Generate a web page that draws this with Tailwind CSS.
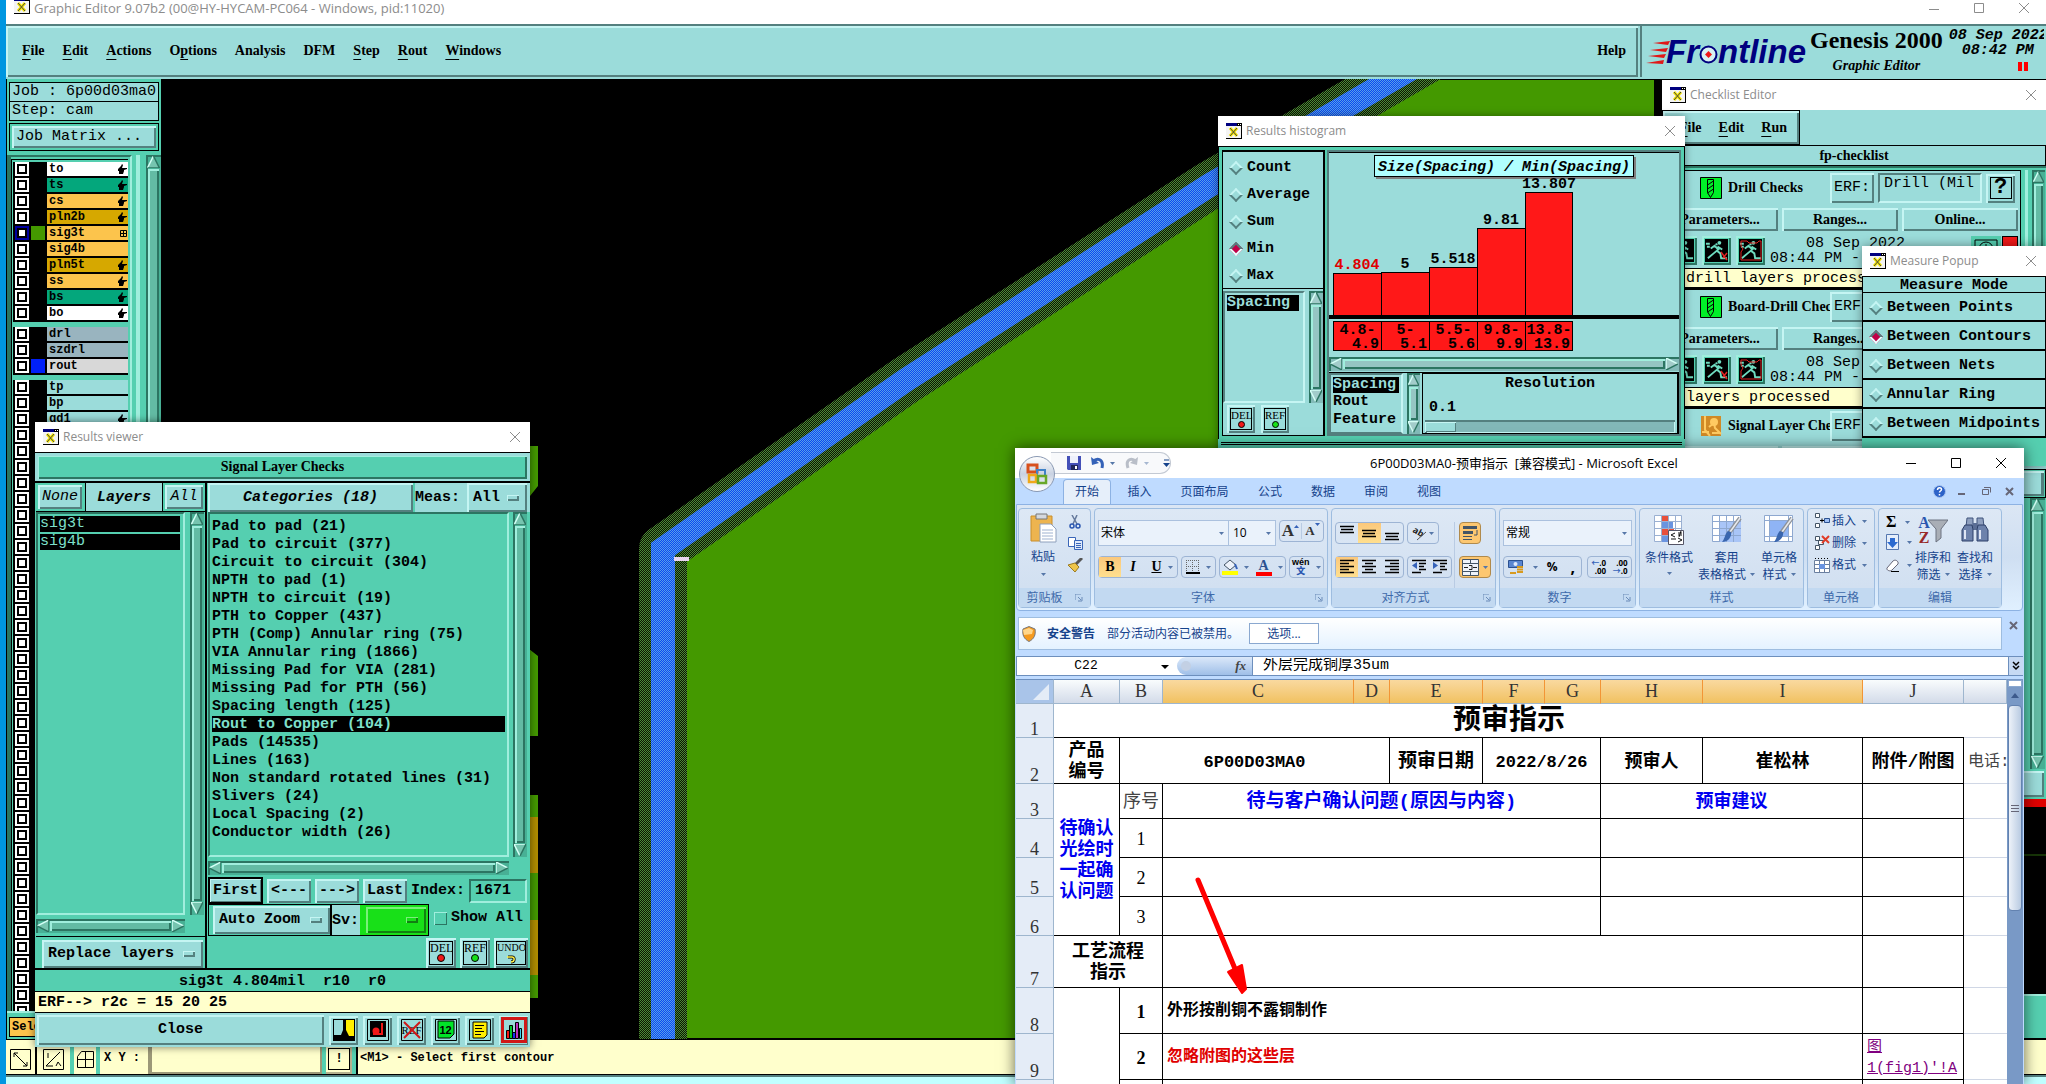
<!DOCTYPE html>
<html lang="zh-CN">

    <head>
        <meta charset="UTF-8">
        <meta name="viewport" content="width=device-width, initial-scale=1.0">
        <title>Graphic Editor 9.07b2</title>
        <script src="https://cdn.jsdelivr.net/npm/@tailwindcss/browser@4"></script>
    </head>

    <body class="relative flex h-screen overflow-hidden bg-[#0096e0] font-['Liberation_Mono','Noto_Sans_CJK_SC',monospace] text-[15px] leading-[18px] font-bold text-black">

        <!-- shared icons -->
        <svg class="hidden">
            <symbol id="x-app" viewBox="0 0 16 16">
                <path d="M0 0h16v16H0z" fill="#000"/><path d="M0 3h15v12H0z" fill="#f4f4f4"/><path d="M0 0h11v3H0z" fill="#00007f"/><path d="M12 1h1v1h-1zM14 1h1v1h-1z" fill="#fff"/>
                <path d="M4 5l7 8M11 5l-7 8" stroke="#f5e600" stroke-width="3"/><path d="M4 5l7 8M11 5l-7 8" stroke="#444" stroke-width="1"/>
            </symbol>
            <symbol id="close-x" viewBox="0 0 12 12"><path d="M1 1l10 10M11 1L1 11" stroke="currentColor" fill="none"/></symbol>
            <symbol id="tri-up" viewBox="0 0 12 12"><path d="M6 0L0 12h12z" fill="#fff" fill-opacity=".25"/><path d="M6 0L0 12" stroke="#d4fff6" stroke-width="1.5"/><path d="M6 0l6 12H0" stroke="#2c7562" fill="none" stroke-width="1.5"/></symbol>
            <symbol id="tri-down" viewBox="0 0 12 12"><path d="M6 12L0 0h12z" fill="#fff" fill-opacity=".25"/><path d="M6 12L0 0h12" stroke="#d4fff6" fill="none" stroke-width="1.5"/><path d="M12 0L6 12" stroke="#2c7562" stroke-width="1.5"/></symbol>
            <symbol id="tri-left" viewBox="0 0 12 12"><path d="M0 6L12 0v12z" fill="#fff" fill-opacity=".25"/><path d="M0 6L12 0" stroke="#d4fff6" stroke-width="1.5"/><path d="M12 0v12L0 6" stroke="#2c7562" fill="none" stroke-width="1.5"/></symbol>
            <symbol id="tri-right" viewBox="0 0 12 12"><path d="M12 6L0 0v12z" fill="#fff" fill-opacity=".25"/><path d="M12 6L0 0v12" stroke="#d4fff6" fill="none" stroke-width="1.5"/><path d="M12 6L0 12" stroke="#2c7562" stroke-width="1.5"/></symbol>
            <symbol id="hand" viewBox="0 0 10 10"><path d="M1 5l3-3 1-2 1 1-1 3h5v1L7 6v1L6 10H2V7H1z" fill="#000"/></symbol>
            <symbol id="caret" viewBox="0 0 5 3"><path d="M0 0h5L2.500 3z" fill="#5677a8"/></symbol>
            <symbol id="launcher" viewBox="0 0 8 8"><path d="M0 6V0h6" stroke="#6a8bb8" fill="none"/><path d="M3 3l3 3M7 3v4H3" stroke="#6a8bb8" fill="none"/></symbol>
            <symbol id="drill" viewBox="0 0 22 22"><path d="M.5.5h21v21H.5z" fill="#00f028" stroke="#000"/><path d="M7.500 2.500h6v13l-3 5-3-5zM7.500 8l6-4M7.500 12l6-4M7.500 16l6-4" fill="none" stroke="#000"/></symbol>
            <symbol id="signal" viewBox="0 0 22 22"><path d="M1 1h20v20H1z" fill="#d18a26"/><circle cx="14" cy="7" r="4" fill="#ffcb62"/><path d="M5 1v14l5 6M2 17h7M9 12l5-4 1 5 6 6M12 18h8" stroke="#ffcb62" stroke-width="2" fill="none"/></symbol>
            <symbol id="runner" viewBox="0 0 24 24"><path d="M0 0h24v24H0z"/><path d="M11 5l2 1M6 10l4-3 4 4-5 4-6 5M12 12l4 3 1 6M13 8l5 3M17 20h6M2 8h3M1 5h4" stroke="#6fdcc0" stroke-width="2" fill="none"/><circle cx="15" cy="4" r="2" fill="#6fdcc0"/></symbol>
            <symbol id="wbrush" viewBox="0 0 30 30"><path d="M28 3L17 18" stroke="#8d9299" stroke-width="4"/><path d="M28 3L18 17" stroke="#e8eaee" stroke-width="1.500"/><path d="M19 17c1 5-3 10-9 10 3-3 3-9 6-11z" fill="#3a66ae"/></symbol>
        </svg>

        <!-- desktop strip left of the editor -->
        <div class="w-1.5 shrink-0"></div>

        <div class="flex min-w-0 flex-1 flex-col bg-[#9bdcda]">
            <div class="flex h-6 shrink-0 items-start bg-white pl-2 text-[13px] leading-4 font-normal text-[#8c8c8c]">
                <svg class="mr-1 size-4 -mt-0.5"><use href="#x-app"/></svg>
                <h1 class="flex-1 font-['Open_Sans','Noto_Sans_CJK_SC',sans-serif]">Graphic Editor 9.07b2 (00@HY-HYCAM-PC064 - Windows, pid:11020)</h1>
                <button class="h-4 w-[45px]" aria-label="Minimize"><svg class="mx-auto h-3 w-3"><path d="M1 7.500h10" stroke="#8c8c8c"/></svg></button>
                <button class="h-4 w-[45px]" aria-label="Maximize"><svg class="mx-auto h-3 w-3"><path d="M1.500 1.500h9v9h-9z" stroke="#8c8c8c" fill="none"/></svg></button>
                <button class="h-4 w-[45px]" aria-label="Close"><svg class="mx-auto size-3"><use href="#close-x"/></svg></button>
            </div>

            <header class="flex h-[55px] shrink-0 border-t-2 border-[#54807f] pb-0.5 font-['Liberation_Serif',serif] text-[14px]">
                <nav class="flex flex-1 items-center gap-[18px] pr-3 pb-0.5 pl-4 shadow-[inset_2px_2px_#c5f5f3,inset_-2px_-2px_#54807f]">
                    <button><span class="underline underline-offset-4">F</span>ile</button>
                    <button><span class="underline underline-offset-4">E</span>dit</button>
                    <button><span class="underline underline-offset-4">A</span>ctions</button>
                    <button>O<span class="underline underline-offset-4">p</span>tions</button>
                    <button>Analysis</button>
                    <button>DFM</button>
                    <button><span class="underline underline-offset-4">S</span>tep</button>
                    <button><span class="underline underline-offset-4">R</span>out</button>
                    <button><span class="underline underline-offset-4">W</span>indows</button>
                    <button class="ml-auto">Help</button>
                </nav>
                <div class="ml-0.5 flex w-[406px] border-l-2 border-[#54807f] pl-1">
                    <div class="flex items-center text-[33px] leading-none text-[#00007f] italic font-['Liberation_Sans',sans-serif]">
                        <svg class="-mr-1 h-6 w-6" viewBox="0 0 24 24"><path d="M7 3l17-2-2 4zM4 10l18-2-2 4zM2 16l18-2-2 4zM0 23l18-3-1 4z" fill="#e01818"/></svg>
                        <span>Fr</span>
                        <svg class="mt-1.5 size-[19px]" viewBox="0 0 19 19"><circle cx="9.500" cy="9.500" r="8" fill="#d8f2f2" stroke="#00007f" stroke-width="2"/><path d="M9.500 6l3.500 3.500-3.500 3.500L6 9.500z" fill="#f01818"/></svg>
                        <span>ntline</span>
                    </div>
                    <div class="ml-1 shrink-0 text-center">
                        <div class="text-[24px] leading-7">Genesis 2000</div>
                        <div class="mt-1 leading-4 italic">Graphic Editor</div>
                    </div>
                    <div class="ml-1.5 w-[95px] shrink-0 overflow-hidden pt-0.5 text-right font-['Liberation_Mono',monospace] text-[15px] leading-[15px] italic">
                        <div class="whitespace-nowrap text-left">08 Sep 2022</div>
                        <div class="pr-2.5">08:42 PM</div>
                        <svg class="mt-1 mr-4 ml-auto h-[9px] w-2.5"><path d="M0 0h4v9H0zM6 0h4v9H6z" fill="#f00"/></svg>
                    </div>
                </div>
            </header>

            <main class="flex min-h-0 flex-1">
                <aside class="flex w-[155px] shrink-0 flex-col border-l border-black bg-[#55cfb0] pt-[3px]">
                    <div class="mx-0.5 border border-black bg-[#9bdcda] pl-0.5 font-normal">Job : 6p00d03ma0</div>
                    <div class="mx-0.5 -mt-px border border-black bg-[#9bdcda] pl-0.5 font-normal">Step: cam</div>
                    <div class="mx-0.5 mt-0.5 border border-black p-0.5"><button class="block h-[22px] w-full bg-[#9bdcda] pl-1 text-left font-normal shadow-[inset_2px_2px_#c5f5f3,inset_-2px_-2px_#54807f]">Job Matrix ...</button></div>
                    <div class="mt-1 flex min-h-0 flex-1 border-l-4 border-[#2c7562]">
                        <div class="w-[122px] overflow-hidden border-t-2 border-r-2 border-[#2c7562] border-r-[#a0eedd]">
                            <div id="layers" class="mt-0.5 mr-0.5 flex flex-col gap-[5px] border-t border-l border-black pt-0.5 pl-px text-[12px] leading-[14px]"></div>
                        </div>
                        <div class="ml-1 w-1 bg-[#a0eedd]"></div>
                        <div class="vbar ml-1.5 flex w-[15px] flex-col"></div>
                    </div>
                    <div class="h-7 border-t-2 border-[#a0eedd] pt-1 pl-0.5"><span class="block h-5 w-16 border border-black bg-[#fcc44c] pl-0.5 text-[12px]">Selected</span></div>
                </aside>

                <div class="min-w-0 flex-1 overflow-hidden bg-black">
                    <svg class="h-full w-full" viewBox="161 79 1885 960" preserveAspectRatio="xMinYMin slice">
                        <defs>
                            <pattern id="blueDots" width="2" height="2" patternUnits="userSpaceOnUse"><path d="M0 0h2v2H0z" fill="#0a48f4"/><path d="M0 0h1v1H0zM1 1h1v1H1z" fill="#58a0e8"/></pattern>
                            <pattern id="greenDots" width="2" height="2" patternUnits="userSpaceOnUse"><path d="M0 0h2v2H0z" fill="#0d1400"/><path d="M0 0h1v1H0zM1 1h1v1H1z" fill="#4a8a38"/></pattern>
                        </defs>
                        <path d="M663 1038V549L906 380 1210 185 1392 80H1654V1038z" fill="#449900"/>
                        <path d="M663 1050V549L906 380 1210 185 1450 46" fill="none" stroke="url(#greenDots)" stroke-width="48" stroke-linejoin="round"/>
                        <path d="M663 1050V549L906 380 1210 185 1450 46" fill="none" stroke="url(#blueDots)" stroke-width="24"/>
                        <path d="M674 557h15v4h-15z" fill="#e9d5f0"/>
                        <path d="M520 446h18v40l-8 10h-10zM520 642l18 14v80h-18zM520 795h18v203h-18z" fill="#449900"/>
                        <path d="M520 817h18v56h-18zM520 920h18v55h-18z" fill="#b08c00"/>
                        <path d="M2000 799h46v8h-46z" fill="#e00000"/><path d="M2000 855h46" stroke="#2f6a10"/>
                        <path d="M2000 994h46v44h-46z" fill="#55cfb0"/><path d="M2000 995h46" stroke="#a0eedd" stroke-width="2"/>
                    </svg>
                </div>
            </main>

            <footer class="shrink-0">
                <div class="flex h-9 items-stretch border-y border-black bg-[#ffffcc] pt-1 text-[12px] leading-[28px]">
                    <div class="flex w-[31px] items-center justify-center border-r-2 border-black"><svg class="size-[21px]"><path d="M.5.5h20v20H.5zM4 4l13 13M4 8V4h4M13 17h4v-4" fill="none" stroke="#000"/></svg></div>
                    <div class="flex w-[33px] items-center justify-center"><svg class="size-[21px]"><path d="M.5.5h20v20H.5zM3 17L17 3M3 17h7M5 4v5M13 17l2-4 3 4" fill="none" stroke="#000"/></svg></div>
                    <div class="flex w-[30px] items-center justify-center border-x-4 border-[#55cfb0]"><svg class="size-[17px]"><path d="M.5 5.500l4-5h12v16H.5zM8.500 0v17M0 8.500h17" fill="none" stroke="#000"/></svg></div>
                    <label for="xy" class="w-[48px] pl-1 whitespace-nowrap">X Y :</label>
                    <input id="xy" class="w-[174px] border-2 border-[#9c9878] border-l-4 px-1" type="text">
                    <div class="flex w-[34px] items-center justify-center border-x-4 border-[#55cfb0] shadow-[inset_-2px_-2px_#b5b18e]"><span class="border border-black px-1.5 leading-5">!</span></div>
                    <p class="flex-1 border-l-2 border-black pl-0.5">&lt;M1&gt; - Select first contour</p>
                </div>
                <div class="h-[9px] border-t-2 border-[#54807f] bg-[#c0ffff]"></div>
            </footer>
        </div>

        <!-- Checklist Editor -->
        <section class="absolute top-20 right-0 flex h-[719px] w-[384px] flex-col overflow-hidden bg-[#9bdcda]">
            <div class="flex h-[30px] shrink-0 items-center bg-white px-2 text-[12px] font-normal text-[#8c8c8c]">
                <svg class="mr-1 size-4"><use href="#x-app"/></svg>
                <h2 class="flex-1 font-['Open_Sans',sans-serif]">Checklist Editor</h2>
                <button aria-label="Close checklist"><svg class="mr-px size-3"><use href="#close-x"/></svg></button>
            </div>
            <nav class="flex h-[35px] w-[138px] shrink-0 items-center gap-[17px] border border-black pl-4 font-['Liberation_Serif',serif] text-[14px] shadow-[inset_2px_2px_#c5f5f3,inset_-2px_-2px_#54807f]">
                <button><span class="underline underline-offset-4">F</span>ile</button>
                <button><span class="underline underline-offset-4">E</span>dit</button>
                <button><span class="underline underline-offset-4">R</span>un</button>
            </nav>
            <h3 class="h-[21px] shrink-0 border border-black text-center font-['Liberation_Serif',serif] text-[14px] leading-5">fp-checklist</h3>
            <div class="flex h-[293px] shrink-0 border-t-2 border-[#2c7562] bg-[#55cfb0] pt-0.5">
                <div id="checks" class="w-[359px] overflow-hidden border-t border-r border-black bg-[#9bdcda]"></div>
                <div class="ml-1 w-[3px] bg-[#a0eedd]"></div>
                <div class="vbar ml-1 flex w-[13px] flex-col"></div>
            </div>
            <div class="mt-[10px] h-[29px] shrink-0 border border-black bg-[#55cfb0] p-px"><button class="h-full w-full bg-[#9bdcda] shadow-[inset_2px_2px_#c5f5f3,inset_-3px_-2px_#54807f]" aria-label="Results"></button></div>
            <div class="flex min-h-0 flex-1 justify-end border-l border-black bg-[#55cfb0] pr-px"><div class="vbar flex w-[15px] flex-col"></div></div>
            <div class="flex h-[30px] shrink-0 bg-[#55cfb0] p-0.5"><button class="flex-1 bg-[#9bdcda] shadow-[inset_2px_2px_#c5f5f3,inset_-2px_-2px_#54807f]" aria-label="Close"></button></div>
        </section>

        <!-- Results histogram -->
        <section class="absolute top-[116px] left-[1218px] flex h-[340px] w-[467px] flex-col bg-[#55cfb0] shadow-[0_0_8px_#0006]">
            <div class="flex h-[30px] shrink-0 items-center bg-white px-2 text-[12px] font-normal text-[#8c8c8c]">
                <svg class="mr-1 size-4"><use href="#x-app"/></svg>
                <h2 class="flex-1 font-['Open_Sans',sans-serif]">Results histogram</h2>
                <button aria-label="Close histogram"><svg class="mr-px size-3"><use href="#close-x"/></svg></button>
            </div>
            <div class="flex h-[293px] gap-0.5 border-x border-t border-black px-[3px] py-[3px]">
                <div class="flex w-[103px] flex-col border border-t-2 border-r-2 border-black bg-[#9bdcda]">
                    <fieldset id="stats" class="h-[136px] pt-0.5"></fieldset>
                    <div class="flex h-[116px] border-t border-black pt-0.5">
                        <div class="w-[82px] border-2 border-[#54807f] border-r-[#c5f5f3] border-b-[#c5f5f3] p-0.5"><p class="h-4 w-[72px] bg-black leading-4 text-[#9bdcda]">Spacing</p></div>
                        <div class="vbar ml-1 flex w-[14px] flex-col"></div>
                    </div>
                    <div class="flex gap-1.5 p-0.5 pl-1 font-['Liberation_Serif',serif] text-[11px] leading-3 font-normal">
                        <button class="size-7 p-[3px] shadow-[inset_2px_2px_#c5f5f3,inset_-2px_-2px_#54807f]"><span class="block h-[22px] border border-black">DEL<i class="mx-auto block size-[7px] rounded-full border border-black bg-[#f01818]"></i></span></button>
                        <button class="size-7 p-[3px] shadow-[inset_2px_2px_#c5f5f3,inset_-2px_-2px_#54807f]"><span class="block h-[22px] border border-black">REF<i class="mx-auto block size-[7px] rounded-full border border-black bg-[#18e018]"></i></span></button>
                    </div>
                </div>
                <div class="flex flex-1 flex-col border-2 border-[#54807f] bg-[#9bdcda]">
                    <div class="relative h-[168px] border-t border-black border-b-4">
                        <h3 class="mx-auto mt-0.5 h-[22px] w-[260px] border border-black bg-[#b0ffff] text-center leading-6 italic whitespace-nowrap shadow-[2px_2px_#808080]">Size(Spacing) / Min(Spacing)</h3>
                        <div id="bars" class="absolute bottom-0 left-1 flex items-end"></div>
                    </div>
                    <div id="ranges" class="mt-0.5 ml-1 flex h-[30px]"></div>
                    <div class="hbar mt-1.5 flex h-[14px]"></div>
                    <div class="mt-px flex flex-1 border-t border-black">
                        <div class="w-[74px] border-2 border-[#54807f] border-r-[#c5f5f3] pt-0.5 pl-0.5">
                            <p class="h-4 w-[66px] bg-black leading-4 text-[#9bdcda]">Spacing</p><p>Rout</p><p>Feature</p>
                        </div>
                        <div class="vbar ml-1 flex w-[13px] flex-col"></div>
                        <div class="ml-0.5 flex-1 border border-black border-r-2 px-0.5">
                            <label for="res" class="block pl-0 text-center leading-5">Resolution</label>
                            <output class="block pt-0.5 pl-1 leading-6 font-bold">0.1</output>
                            <input id="res" type="range" value="0" class="block h-[13px] w-full appearance-none bg-[#82b8b8] shadow-[inset_2px_2px_#54807f,inset_-1px_-1px_#c5f5f3] [&::-webkit-slider-thumb]:h-[10px] [&::-webkit-slider-thumb]:w-[31px] [&::-webkit-slider-thumb]:appearance-none [&::-webkit-slider-thumb]:bg-[#9bdcda] [&::-webkit-slider-thumb]:shadow-[inset_1px_1px_#c5f5f3,inset_-1px_-1px_#54807f]">
                        </div>
                    </div>
                </div>
            </div>
            <div class="mx-[3px] mt-[3px] h-[3px] border-y border-black"></div>
        </section>

        <!-- Measure Popup -->
        <section class="absolute top-[246px] right-0 h-[220px] w-[184px] bg-[#55cfb0] shadow-[0_0_10px_#0006]">
            <div class="flex h-[30px] items-center bg-white px-2 text-[12px] font-normal text-[#8c8c8c]">
                <svg class="mr-1 size-4"><use href="#x-app"/></svg>
                <h2 class="flex-1 font-['Open_Sans',sans-serif]">Measure Popup</h2>
                <button aria-label="Close popup"><svg class="mr-px size-3"><use href="#close-x"/></svg></button>
            </div>
            <h3 class="h-[17px] border border-black bg-[#9bdcda] text-center leading-[17px]">Measure Mode</h3>
            <fieldset id="modes" class="border-x border-black bg-[#9bdcda]"></fieldset>
        </section>

        <!-- Results viewer -->
        <section class="absolute top-[422px] left-[35px] flex h-[625px] w-[495px] flex-col bg-[#9bdcda] shadow-[0_0_8px_#0008]">
            <div class="flex h-[30px] shrink-0 items-center bg-white px-2 text-[12px] font-normal text-[#8c8c8c]">
                <svg class="mr-1 size-4"><use href="#x-app"/></svg>
                <h2 class="flex-1 font-['Open_Sans',sans-serif]">Results viewer</h2>
                <button aria-label="Close viewer"><svg class="mr-px size-3"><use href="#close-x"/></svg></button>
            </div>
            <div class="h-[29px] shrink-0 border-t border-black p-[3px]"><h3 class="h-[23px] bg-[#55cfb0] text-center font-['Liberation_Serif',serif] text-[14px] leading-[22px] shadow-[inset_1px_1px_#a0eedd,inset_-2px_-2px_#2c7562]">Signal Layer Checks</h3></div>
            <div class="flex h-[489px] shrink-0 border-y-2 border-black bg-[#55cfb0]">
                <div class="flex w-[172px] flex-col border-r-2 border-black pl-px">
                    <div class="flex h-[29px] items-stretch border-b border-black font-normal italic">
                        <button class="m-0.5 w-[44px] bg-[#9bdcda] shadow-[inset_2px_2px_#c5f5f3,inset_-2px_-2px_#54807f]">None</button>
                        <p class="ml-px w-[78px] border-x border-black bg-[#9bdcda] text-center leading-[29px] font-bold">Layers</p>
                        <button class="m-0.5 w-[38px] bg-[#9bdcda] shadow-[inset_2px_2px_#c5f5f3,inset_-2px_-2px_#54807f]">All</button>
                    </div>
                    <div class="flex h-[406px] font-normal text-[#7fe0cc]">
                        <ul class="w-[149px] border-2 border-[#2c7562] border-r-[#a0eedd] border-b-[#a0eedd] p-0.5">
                            <li class="mb-0.5 h-4 w-[140px] bg-black leading-4">sig3t</li>
                            <li class="h-4 w-[140px] bg-black leading-4">sig4b</li>
                        </ul>
                        <div class="vbar ml-[5px] flex w-[14px] flex-col"></div>
                    </div>
                    <div class="hbar mt-1 flex h-[14px] w-[149px]"></div>
                    <div class="mt-[3px] flex-1 border-t border-black pt-[3px] pr-0.5 pl-1.5">
                        <div class="flex h-7 items-center bg-[#9bdcda] pr-2 pl-1.5 shadow-[inset_2px_2px_#c5f5f3,inset_-2px_-2px_#54807f]">
                            <select aria-label="Layer mode" class="flex-1 appearance-none"><option>Replace layers</option></select>
                            <i class="h-[6px] w-3 shadow-[inset_1px_1px_#c5f5f3,inset_-2px_-2px_#54807f]"></i>
                        </div>
                    </div>
                </div>
                <div class="flex flex-1 flex-col pl-px">
                    <div class="flex h-[29px] bg-[#9bdcda]">
                        <button class="w-[205px] italic shadow-[inset_2px_2px_#c5f5f3,inset_-2px_-2px_#54807f]">Categories (18)</button>
                        <label for="meas" class="w-[54px] border-l-2 border-[#55cfb0] leading-[30px]">Meas:</label>
                        <div class="flex w-[60px] items-center pr-2 pl-1.5 shadow-[inset_2px_2px_#c5f5f3,inset_-2px_-2px_#54807f]">
                            <select id="meas" class="flex-1 appearance-none"><option>All</option></select>
                            <i class="h-[6px] w-3 shadow-[inset_1px_1px_#c5f5f3,inset_-2px_-2px_#54807f]"></i>
                        </div>
                    </div>
                    <div class="flex h-[345px]">
                        <ul id="cats" class="w-[301px] border-2 border-[#2c7562] border-r-[#a0eedd] border-b-[#a0eedd] pt-1 pl-0.5 font-bold"></ul>
                        <div class="vbar ml-1 flex w-[14px] flex-col"></div>
                    </div>
                    <div class="hbar mt-1 flex h-[14px] w-[301px]"></div>
                    <div class="mt-0.5 flex h-[27px] items-center gap-1">
                        <button class="h-[27px] w-[55px] border-2 border-black bg-[#9bdcda] shadow-[inset_1px_1px_#c5f5f3,inset_-1px_-1px_#54807f]">First</button>
                        <button class="h-6 w-[44px] bg-[#9bdcda] shadow-[inset_2px_2px_#c5f5f3,inset_-2px_-2px_#54807f]">&lt;---</button>
                        <button class="h-6 w-[44px] bg-[#9bdcda] shadow-[inset_2px_2px_#c5f5f3,inset_-2px_-2px_#54807f]">---&gt;</button>
                        <button class="h-6 w-[44px] bg-[#9bdcda] shadow-[inset_2px_2px_#c5f5f3,inset_-2px_-2px_#54807f]">Last</button>
                        <label for="idx">Index:</label>
                        <input id="idx" type="text" value="1671" class="h-6 w-[58px] border-2 border-[#2c7562] border-r-[#a0eedd] border-b-[#a0eedd] pl-1">
                    </div>
                    <div class="flex h-8">
                        <div class="flex border border-black">
                            <div class="my-px ml-1 flex w-[117px] items-center bg-[#9bdcda] pr-2 pl-1.5 shadow-[inset_2px_2px_#c5f5f3,inset_-2px_-2px_#54807f]">
                                <select aria-label="Zoom" class="flex-1 appearance-none"><option>Auto Zoom</option></select>
                                <i class="h-[6px] w-3 shadow-[inset_1px_1px_#c5f5f3,inset_-2px_-2px_#54807f]"></i>
                            </div>
                            <label for="sv" class="w-[30px] border-l-2 border-black bg-[#9bdcda] leading-8">Sv:</label>
                            <div class="flex w-[68px] items-center bg-[#18e018] py-0.5 pr-0.5 pl-1.5">
                                <div class="flex h-full flex-1 items-center pr-2 shadow-[inset_2px_2px_#7af07a,inset_-2px_-2px_#128012]">
                                    <select id="sv" class="w-8 appearance-none"><option></option></select>
                                    <i class="ml-auto h-[6px] w-3 shadow-[inset_1px_1px_#7af07a,inset_-2px_-2px_#128012]"></i>
                                </div>
                            </div>
                        </div>
                        <label class="flex h-7 items-center gap-1 pl-[5px]"><input type="checkbox" class="size-[13px] appearance-none shadow-[inset_1px_1px_#a0eedd,inset_-1px_-1px_#2c7562]">Show All</label>
                    </div>
                    <div class="mt-0.5 mr-0.5 flex justify-end gap-1 font-['Liberation_Serif',serif] text-[12px] leading-3 font-normal">
                        <button class="h-[30px] w-[30px] bg-[#9bdcda] p-[3px] shadow-[inset_2px_2px_#c5f5f3,inset_-2px_-2px_#54807f]"><span class="block h-6 border border-black">DEL<i class="mx-auto block size-2 rounded-full border border-black bg-[#f01818]"></i></span></button>
                        <button class="h-[30px] w-[30px] bg-[#9bdcda] p-[3px] shadow-[inset_2px_2px_#c5f5f3,inset_-2px_-2px_#54807f]"><span class="block h-6 border border-black">REF<i class="mx-auto block size-2 rounded-full border border-black bg-[#18e018]"></i></span></button>
                        <button class="h-[30px] w-[34px] bg-[#9bdcda] p-px shadow-[inset_2px_2px_#c5f5f3,inset_-2px_-2px_#54807f]"><span class="mx-px block h-6 border border-black text-[10px]">UNDO<svg class="mx-auto h-[10px] w-2.5"><path d="M2 3h4c3 0 3 5-1 5" fill="none" stroke="#000" stroke-width="3"/><path d="M1 3h5c3 0 3 5-1 5" fill="none" stroke="#fff04a" stroke-width="1.500"/></svg></span></button>
                    </div>
                </div>
            </div>
            <p class="h-[21px] shrink-0 bg-[#55cfb0] text-center leading-6 whitespace-pre">sig3t 4.804mil  r10  r0</p>
            <p class="h-[22px] shrink-0 border-y border-black bg-[#ffffcc] pl-[3px] leading-[22px]">ERF--&gt; r2c = 15 20 25</p>
            <div class="flex flex-1 items-center gap-[5px] px-0.5">
                <button class="h-[30px] w-[287px] shadow-[inset_2px_2px_#c5f5f3,inset_-2px_-2px_#54807f]">Close</button>
                <button aria-label="Histogram light" class="flex size-[29px] items-center justify-center shadow-[inset_2px_2px_#c5f5f3,inset_-2px_-2px_#54807f]"><svg class="size-[22px]"><path d="M0 0h22v22H0z"/><path d="M1 1h9v10l-2 5H1z" fill="#9bdcda"/><path d="M13 1h8v16h-5l-3-6z" fill="#ffee00"/></svg></button>
                <button aria-label="Note" class="flex size-[29px] items-center justify-center shadow-[inset_2px_2px_#c5f5f3,inset_-2px_-2px_#54807f]"><svg class="size-[22px]"><path d="M.5.5h21v21H.5z" fill="#9bdcda" stroke="#000"/><path d="M3 2h16v16H3z"/><circle cx="9" cy="12" r="3.500" fill="#f01818"/><path d="M15 4v11M6 15h10" stroke="#f01818" stroke-width="2"/></svg></button>
                <button aria-label="No reference" class="relative flex size-[29px] items-center justify-center font-['Liberation_Serif',serif] text-[11px] font-normal shadow-[inset_2px_2px_#c5f5f3,inset_-2px_-2px_#54807f]">REF<svg class="absolute size-[22px]"><path d="M.5.5h21v21H.5z" fill="none" stroke="#000"/><path d="M3 3l16 16M19 3L3 19" stroke="#d01818" stroke-width="2"/></svg></button>
                <button aria-label="Page" class="relative flex size-[29px] items-center justify-center text-[11px] shadow-[inset_2px_2px_#c5f5f3,inset_-2px_-2px_#54807f]"><svg class="absolute size-[22px]"><path d="M.5.5h21v21H.5z" fill="#9bdcda" stroke="#000"/><path d="M3 2h16v13l-4 4H3z" fill="#00e428" stroke="#000"/></svg><span class="relative font-['Liberation_Sans',sans-serif]">12</span></button>
                <button aria-label="Report" class="flex size-[29px] items-center justify-center shadow-[inset_2px_2px_#c5f5f3,inset_-2px_-2px_#54807f]"><svg class="size-[22px]"><path d="M.5.5h21v21H.5z" fill="#9bdcda" stroke="#000"/><path d="M4 3h14v13l-3 3H4z" fill="#ffee00" stroke="#000"/><path d="M6 6.500h9M6 9.500h7M6 12.500h9M6 15.500h6" stroke="#000"/></svg></button>
                <button aria-label="Histogram" class="flex size-[29px] items-center justify-center shadow-[inset_1px_1px_#c5f5f3,inset_-1px_-1px_#54807f]"><svg class="size-[26px]" viewBox="0 0 26 26"><path d="M1.500 1.500h23v23h-23z" fill="#9bdcda" stroke="#d01818" stroke-width="3"/><path d="M5.500 13.500h3v8h-3z" fill="#f01818" stroke="#000"/><path d="M8.500 8.500h3v13h-3z" fill="#00c828" stroke="#000"/><path d="M11.500 15.500h3v6h-3z" fill="#1830f0" stroke="#000"/><path d="M14.500 5.500h3v16h-3z" fill="#c030c0" stroke="#000"/><path d="M18.500 11.500h2v10h-2z" fill="#40d0f0" stroke="#000"/></svg></button>
            </div>
        </section>

        <!-- Excel -->
        <section class="absolute top-[448px] left-[1015px] h-[636px] w-[1009px] overflow-hidden bg-[#bfdbff] font-['Open_Sans','Noto_Sans_CJK_SC',sans-serif] text-[12px] leading-4 font-normal text-[#15428b] shadow-[0_0_14px_#0009]">
            <div class="flex h-[30px] items-center bg-white pl-[36px] text-black">
                <div class="flex h-[22px] w-[120px] items-center gap-1.5 rounded-r-full border border-l-0 border-[#c3c9d3] bg-[#f8f9fb] pl-4">
                    <svg class="size-[14px]"><path d="M0 0h14v14H1l-1-1z" fill="#4450b8"/><path d="M3 0h8v7H3z" fill="#eef1fb"/><path d="M4 9h7v5H4z" fill="#20285c"/><path d="M8 10h2v3H8z" fill="#fff"/></svg>
                    <svg class="ml-1 h-3 w-[13px]"><path d="M2 5c4-5 11-3 9 6" fill="none" stroke="#3562b8" stroke-width="3"/><path d="M0 0l1 8 7-2z" fill="#3562b8"/></svg>
                    <svg class="h-[3px] w-[5px]"><use href="#caret"/></svg>
                    <svg class="ml-1 h-3 w-[13px]"><path d="M11 5C7 0 0 2 3 11" fill="none" stroke="#b9bec8" stroke-width="3"/><path d="M13 0l-1 8-7-2z" fill="#b9bec8"/></svg>
                    <svg class="h-[3px] w-[5px] opacity-50"><use href="#caret"/></svg>
                </div>
                <svg class="-ml-2 h-2 w-[7px]"><path d="M1 1h5" stroke="#15428b"/><path d="M0 4h7L3.500 8z" fill="#15428b"/></svg>
                <h2 class="ml-[200px] flex-1 text-[13px] whitespace-pre">6P00D03MA0-预审指示  [兼容模式] - Microsoft Excel</h2>
                <button class="w-[45px]" aria-label="Minimize Excel"><svg class="mx-auto h-3 w-3"><path d="M1 6.500h10" stroke="#000"/></svg></button>
                <button class="w-[45px]" aria-label="Maximize Excel"><svg class="mx-auto h-3 w-3"><path d="M1.500 1.500h9v9h-9z" stroke="#000" fill="none"/></svg></button>
                <button class="w-[46px]" aria-label="Close Excel"><svg class="mx-auto size-3"><use href="#close-x"/></svg></button>
            </div>
            <!-- office button lies over title and tab bars -->
            <button class="absolute top-2 left-1 flex size-9 items-center justify-center rounded-full border border-[#8a99b3] bg-linear-to-b from-white via-[#c9d2e2] to-white" aria-label="Office">
                <svg class="size-6" viewBox="0 0 24 24"><path d="M3 3h9v7H3z" fill="none" stroke="#d8501c" stroke-width="3"/><path d="M12 8h8v6h-8z" fill="none" stroke="#3f82c8" stroke-width="2"/><path d="M4 13h7v7H4z" fill="none" stroke="#f0a818" stroke-width="2.500"/><path d="M13 14h8v7h-8z" fill="none" stroke="#68a828" stroke-width="2.500"/></svg>
            </button>

            <div class="flex h-[26px] items-end pr-2.5 pl-12">
                <button class="h-[25px] w-[48px] rounded-t border border-b-0 border-[#8db2e3] bg-[#e6effa]">开始</button>
                <button class="h-[25px] w-[57px]">插入</button>
                <button class="h-[25px] w-[73px]">页面布局</button>
                <button class="h-[25px] w-[58px]">公式</button>
                <button class="h-[25px] w-[48px]">数据</button>
                <button class="h-[25px] w-[58px]">审阅</button>
                <button class="h-[25px] w-[48px]">视图</button>
                <div class="ml-auto flex h-[26px] items-center gap-3 text-[#5c6f8c]">
                    <svg class="size-[13px]" viewBox="0 0 13 13"><circle cx="6.500" cy="6.500" r="6" fill="#2c62c8" stroke="#a8c4ee"/><path d="M4.500 5c0-3 4-3 4-.5 0 1.500-2 1.500-2 3M6.500 9v1.500" stroke="#fff" stroke-width="1.500" fill="none"/></svg>
                    <svg class="h-2 w-2"><path d="M0 7h7" stroke="#667" stroke-width="2"/></svg>
                    <svg class="ml-1 h-2 w-[9px]"><path d="M2 .5h6.500v5M.5 2.500h6v5h-6z" stroke="#667" fill="none"/></svg>
                    <svg class="ml-0.5 size-[9px]"><path d="M1 1l7 7M8 1L1 8" stroke="#667" stroke-width="2"/></svg>
                </div>
            </div>

            <!-- ribbon -->
            <div class="mx-px flex h-[107px] items-start gap-[3px] rounded-b border border-[#8db2e3] bg-linear-to-b from-[#dbe6f4] via-[#cfdff2] to-[#e0f0ff] pt-[3px] pl-px">
                <div class="flex h-[100px] w-[73px] flex-col rounded-sm border border-[#9ebde0] bg-linear-to-b from-[#dde8f5] to-[#cfdef0]">
                    <div class="flex flex-1 justify-between px-[7px] pt-1">
                        <button class="flex w-[34px] flex-col items-center">
                            <svg class="h-[30px] w-[27px]" viewBox="0 0 27 30"><path d="M1 3h21v25H1z" fill="#edb44f" stroke="#c98e2a"/><path d="M6 1h11v5H6z" fill="#d4d8de" stroke="#777"/><path d="M10 11h11l5 5v13H10z" fill="#fff" stroke="#8ea0bc"/><path d="M12 17h11M12 20h11M12 23h11M12 26h11" stroke="#9fb2d0"/></svg>
                            <span class="mt-1.5 whitespace-nowrap">粘贴</span>
                            <svg class="mt-2 h-[3px] w-[5px]"><use href="#caret"/></svg>
                        </button>
                        <div class="flex flex-col items-center gap-2 pt-0.5">
                            <svg class="h-[14px] w-3"><path d="M3 0l5 9M8 0L4 9" stroke="#667a9c" stroke-width="1.500"/><circle cx="3" cy="11" r="2" fill="none" stroke="#2b57b0" stroke-width="1.500"/><circle cx="9" cy="11" r="2" fill="none" stroke="#2b57b0" stroke-width="1.500"/></svg>
                            <svg class="h-[13px] w-[15px]"><path d="M.5.5h7v9h-7z" fill="#fff" stroke="#3a66b8"/><path d="M6.500 3.500h8v9h-8z" fill="#dfe9fb" stroke="#3a66b8"/><path d="M8 6.500h5M8 8.500h5M8 10.500h5" stroke="#3a66b8"/></svg>
                            <svg class="h-[14px] w-4"><path d="M9 6l6-6" stroke="#555" stroke-width="3"/><path d="M1 7l7-2 4 4-4 5z" fill="#eec54a" stroke="#9a7a20"/></svg>
                        </div>
                    </div>
                    <div class="flex h-[19px] items-center justify-center bg-[#c2d9f1] text-[#3e6aaa]">剪贴板<svg class="ml-3 size-2"><use href="#launcher"/></svg></div>
                </div>

                <div class="flex h-[100px] w-[234px] flex-col rounded-sm border border-[#9ebde0] bg-linear-to-b from-[#dde8f5] to-[#cfdef0]">
                    <div class="flex flex-1 flex-col gap-2.5 px-[3px] pt-[11px] text-black">
                        <div class="flex h-[26px] items-start">
                            <div class="flex h-[26px] w-[131px] items-center border border-[#abc1de] bg-[#eaf2fb] pr-1"><select aria-label="字体" class="flex-1 appearance-none pl-0.5"><option>宋体</option></select><svg class="h-[3px] w-[5px]"><use href="#caret"/></svg></div>
                            <div class="flex h-[26px] w-[47px] items-center border border-l-0 border-[#abc1de] bg-[#eaf2fb] pr-1"><select aria-label="字号" class="flex-1 appearance-none pl-1"><option>10</option></select><svg class="h-[3px] w-[5px]"><use href="#caret"/></svg></div>
                            <div class="ml-[3px] flex h-[22px] w-[45px] items-center rounded-sm border border-[#9db4d4] font-['Liberation_Serif',serif] font-bold text-[#333]">
                                <button class="flex flex-1 justify-center border-r border-[#b9cbe3] text-[17px]" aria-label="增大字号">A<svg class="mt-0.5 h-[3px] w-[5px]"><path d="M0 3h5L2.500 0z" fill="#3562b8"/></svg></button><button class="flex flex-1 justify-center text-[13px]" aria-label="减小字号">A<svg class="h-[3px] w-[5px]"><path d="M0 0h5L2.500 3z" fill="#3562b8"/></svg></button>
                            </div>
                        </div>
                        <div class="flex h-[22px] gap-[3px] font-['Liberation_Serif',serif] text-[14px] font-bold">
                            <div class="flex w-[80px] items-center rounded-sm border border-[#9db4d4] pr-1">
                                <button class="h-full w-[22px] bg-linear-to-b from-[#fbc87c] to-[#ffdf8e]">B</button><button class="h-full w-6 italic">I</button><button class="h-full flex-1 underline">U</button><svg class="h-[3px] w-[5px]"><use href="#caret"/></svg>
                            </div>
                            <button class="flex w-[35px] items-center justify-between rounded-sm border border-[#9db4d4] px-1" aria-label="边框"><svg class="size-[14px]"><path d="M.5 0v13M6.500 0v13M12.500 0v13M0 .5h13M0 6.500h13" stroke="#666" stroke-dasharray="1 1"/><path d="M0 13h14" stroke="#000" stroke-width="2"/></svg><svg class="h-[3px] w-[5px]"><use href="#caret"/></svg></button>
                            <div class="flex w-[67px] items-center justify-between rounded-sm border border-[#9db4d4] px-0.5">
                                <svg class="size-4"><path d="M2 6l6-5 6 5-6 5z" fill="#eef3fa" stroke="#456"/><path d="M13 5l2 5" stroke="#3562b8" stroke-width="2"/><path d="M0 12h16v4H0z" fill="#ff0"/></svg><svg class="h-[3px] w-[5px]"><use href="#caret"/></svg>
                                <span class="h-[18px] w-4 border-b-4 border-[#f00] text-center leading-[15px] text-[#2b5190]">A</span><svg class="h-[3px] w-[5px]"><use href="#caret"/></svg>
                            </div>
                            <button class="flex w-[35px] items-center justify-between rounded-sm border border-[#9db4d4] px-0.5"><span class="text-center font-['Liberation_Sans','Noto_Sans_CJK_SC',sans-serif] text-[9px] leading-[9px]">wén<br><b class="text-[#2b57b0]">文</b></span><svg class="h-[3px] w-[5px]"><use href="#caret"/></svg></button>
                        </div>
                    </div>
                    <div class="relative flex h-[19px] items-center justify-center bg-[#c2d9f1] pr-4 text-[#3e6aaa]">字体<svg class="absolute right-1 size-2"><use href="#launcher"/></svg></div>
                </div>

                <div class="flex h-[100px] w-[165px] flex-col rounded-sm border border-[#9ebde0] bg-linear-to-b from-[#dde8f5] to-[#cfdef0]">
                    <div class="flex flex-1 justify-between px-[3px] pt-[13px]">
                        <div class="flex flex-col gap-3">
                            <div class="flex h-[22px] gap-[3px]">
                                <div class="flex w-[69px] rounded-sm border border-[#9db4d4]">
                                    <svg class="h-5 w-[22px]"><path d="M4 3.500h14M5 6.500h12M4 9.500h14" stroke="#000" stroke-width="1.500"/></svg><svg class="h-5 w-[23px] bg-linear-to-b from-[#fbc87c] to-[#ffdf8e]"><path d="M4 7.500h14M5 10.500h12M4 13.500h14" stroke="#000" stroke-width="1.500"/></svg><svg class="h-5 w-[22px]"><path d="M4 10.500h14M5 13.500h12M4 16.500h14" stroke="#000" stroke-width="1.500"/></svg>
                                </div>
                                <button class="flex w-8 items-center justify-between rounded-sm border border-[#9db4d4] px-1" aria-label="方向"><svg class="size-4"><text x="0" y="9" transform="rotate(30 4 8)" font-size="9" font-weight="700" fill="#222">ab</text><path d="M5 15l9-8" stroke="#555"/></svg><svg class="h-[3px] w-[5px]"><use href="#caret"/></svg></button>
                            </div>
                            <div class="flex h-[22px] gap-[3px]">
                                <div class="flex w-[69px] rounded-sm border border-[#9db4d4]">
                                    <svg class="h-5 w-[22px] bg-linear-to-b from-[#fbc87c] to-[#ffdf8e]"><path d="M4 3.500h14M4 6.500h9M4 9.500h14M4 12.500h9M4 15.500h14" stroke="#000" stroke-width="1.500"/></svg><svg class="h-5 w-[23px]"><path d="M4 3.500h14M7 6.500h8M4 9.500h14M7 12.500h8M4 15.500h14" stroke="#000" stroke-width="1.500"/></svg><svg class="h-5 w-[22px]"><path d="M4 3.500h14M9 6.500h9M4 9.500h14M9 12.500h9M4 15.500h14" stroke="#000" stroke-width="1.500"/></svg>
                                </div>
                                <div class="flex w-[45px] rounded-sm border border-[#9db4d4]">
                                    <svg class="h-5 w-[21px]"><path d="M4 3.500h14M11 6.500h7M11 9.500h5M11 12.500h7M4 15.500h9" stroke="#000" stroke-width="1.500"/><path d="M9 5v7L4 8.500z" fill="#3562b8"/></svg><svg class="h-5 w-[21px]"><path d="M4 3.500h14M11 6.500h7M11 9.500h5M11 12.500h7M4 15.500h9" stroke="#000" stroke-width="1.500"/><path d="M4 5v7l5-3.500z" fill="#3562b8"/></svg>
                                </div>
                            </div>
                        </div>
                        <div class="flex w-[38px] flex-col gap-3 border-l border-[#b9cbe3] pl-1">
                            <button class="flex size-[22px] items-center justify-center rounded-sm border border-[#b08a4c] bg-[#fdc770]" aria-label="自动换行"><svg class="size-4"><path d="M1 2.500h14M1 7.500h10" stroke="#456" stroke-width="3"/><path d="M15 5v5h-3M1 11.500h9M1 14.500h9" stroke="#456" fill="none"/></svg></button>
                            <button class="flex h-[22px] w-8 items-center justify-between rounded-sm border border-[#b08a4c] bg-[#fdc770] px-0.5" aria-label="合并"><svg class="size-[17px]"><path d="M.5.5h16v16H.5zM0 4.500h17M0 12.500h17M8.500 0v4M8.500 13v4" fill="#eef3fa" stroke="#456"/><path d="M2 8.500h4M11 8.500h4M7 10.500h3v-4H7" stroke="#222" fill="none"/></svg><svg class="h-[3px] w-[5px]"><use href="#caret"/></svg></button>
                        </div>
                    </div>
                    <div class="relative flex h-[19px] items-center justify-center bg-[#c2d9f1] pr-4 text-[#3e6aaa]">对齐方式<svg class="absolute right-1 size-2"><use href="#launcher"/></svg></div>
                </div>

                <div class="flex h-[100px] w-[137px] flex-col rounded-sm border border-[#9ebde0] bg-linear-to-b from-[#dde8f5] to-[#cfdef0]">
                    <div class="flex flex-1 flex-col gap-2.5 px-[3px] pt-[11px] text-black">
                        <div class="flex h-[26px] items-center border border-[#abc1de] bg-[#eaf2fb] pr-1"><select aria-label="数字格式" class="flex-1 appearance-none pl-0.5"><option>常规</option></select><svg class="h-[3px] w-[5px]"><use href="#caret"/></svg></div>
                        <div class="flex h-[22px] justify-between">
                            <div class="flex w-[79px] items-center justify-between rounded-sm border border-[#9db4d4] pr-1.5 pl-1">
                                <svg class="size-4"><path d="M.5 1.500h14v7H.5z" fill="#5a86d0" stroke="#2b5190"/><circle cx="7.500" cy="5" r="2" fill="#dfe9fb"/><path d="M9 8h6M9 10.500h6M9 13h6M2 14h6" stroke="#d79a20" stroke-width="2"/></svg><svg class="h-[3px] w-[5px]"><use href="#caret"/></svg><b>%</b><b class="pl-1 text-[16px]">,</b>
                            </div>
                            <div class="flex w-[45px] items-center justify-around rounded-sm border border-[#9db4d4] text-[8px] leading-[8px] font-bold"><span class="text-right"><span class="text-[#3562b8]">←</span>.0<br>.00</span><span class="text-right">.00<br><span class="text-[#3562b8]">→</span>.0</span></div>
                        </div>
                    </div>
                    <div class="relative flex h-[19px] items-center justify-center bg-[#c2d9f1] pr-4 text-[#3e6aaa]">数字<svg class="absolute right-1 size-2"><use href="#launcher"/></svg></div>
                </div>

                <div class="flex h-[100px] w-[165px] flex-col rounded-sm border border-[#9ebde0] bg-linear-to-b from-[#dde8f5] to-[#cfdef0]">
                    <div class="flex flex-1 justify-between px-1 pt-1.5 leading-[17px] whitespace-nowrap">
                        <button class="flex w-[50px] flex-col items-center"><svg class="h-[30px] w-[30px]"><path d="M.5.5h27v26H.5z" fill="#fff" stroke="#9ab0d2"/><path d="M7 1h7v5H7zM7 14h13v6H7z" fill="#e8503c"/><path d="M7 7h12v6H7zM7 21h7v6H7z" fill="#6a94e0"/><path d="M7.500 0v27M14.500 0v27M21.500 0v27M0 6.500h28M0 13.500h28M0 20.500h28" stroke="#9ab0d2"/><path d="M14.500 15.500h15v14h-15z" fill="#fff" stroke="#556"/><path d="M21 18l-4 2 4 2M17 24h5M24 18h4M24 20h4M27 16l-2 6M24 23l4 2-4 2" stroke="#111" fill="none"/></svg><span class="mt-1">条件格式</span><svg class="mt-1.5 h-[3px] w-[5px]"><use href="#caret"/></svg></button>
                        <button class="flex w-[58px] flex-col items-center"><svg class="h-[30px] w-[30px]"><path d="M.5.5h28v26H.5z" fill="#fff" stroke="#8ea8d0"/><path d="M7 7h22v20H7z" fill="#a9c5f7"/><path d="M7.500 0v27M14.500 0v27M21.500 0v27M0 6.500h29M0 13.500h29M0 20.500h29" stroke="#8ea8d0"/><use href="#wbrush"/></svg><span class="mt-1">套用</span><span class="flex items-center gap-1">表格格式<svg class="h-[3px] w-[5px]"><use href="#caret"/></svg></span></button>
                        <button class="flex w-[40px] flex-col items-center"><svg class="h-[30px] w-[30px]"><path d="M.5.5h28v26H.5z" fill="#fff" stroke="#8ea8d0"/><path d="M6 6h18v15H6z" fill="#8fb4f5"/><path d="M5.500 0v27M24.500 0v27M0 5.500h29M0 21.500h29" stroke="#8ea8d0"/><use href="#wbrush"/></svg><span class="mt-1">单元格</span><span class="flex items-center gap-1">样式<svg class="h-[3px] w-[5px]"><use href="#caret"/></svg></span></button>
                    </div>
                    <div class="flex h-[19px] items-center justify-center bg-[#c2d9f1] text-[#3e6aaa]">样式</div>
                </div>

                <div class="flex h-[100px] w-[68px] flex-col rounded-sm border border-[#9ebde0] bg-linear-to-b from-[#dde8f5] to-[#cfdef0]">
                    <div class="flex flex-1 flex-col gap-1.5 pt-1 pl-1.5 whitespace-nowrap">
                        <button class="flex items-center gap-0.5"><svg class="size-4 shrink-0"><path d="M1.500.5h4v4h-4zM1.500 10.500h4v4h-4z" fill="#fff" stroke="#456"/><path d="M6 7.500h4M8 5.500v4" stroke="#000"/><path d="M10.500 5.500h5v4h-5z" fill="#9fc0f5" stroke="#2b5190"/></svg>插入<svg class="ml-1 h-[3px] w-[5px] shrink-0"><use href="#caret"/></svg></button>
                        <button class="flex items-center gap-0.5"><svg class="size-4 shrink-0"><path d="M1.500 1.500h4v4h-4zM1.500 10.500h4v4h-4zM4.500 5.500h5v4h-5z" fill="#fff" stroke="#456"/><path d="M8 1l7 7M15 1L8 8" stroke="#e03c28" stroke-width="2"/></svg>删除<svg class="ml-1 h-[3px] w-[5px] shrink-0"><use href="#caret"/></svg></button>
                        <button class="flex items-center gap-0.5"><svg class="size-4 shrink-0"><path d="M1 1.500h14" stroke="#000" stroke-dasharray="1 2"/><path d="M.5 3.500h15v12H.5zM0 7.500h16M0 11.500h16M5.500 3v12M10.500 3v12" fill="#fff" stroke="#6a7f9f"/><path d="M5 7h6v5H5z" fill="#6a94e0"/></svg>格式<svg class="ml-1 h-[3px] w-[5px] shrink-0"><use href="#caret"/></svg></button>
                    </div>
                    <div class="flex h-[19px] items-center justify-center bg-[#c2d9f1] text-[#3e6aaa]">单元格</div>
                </div>

                <div class="flex h-[100px] w-[124px] flex-col rounded-sm border border-[#9ebde0] bg-linear-to-b from-[#dde8f5] to-[#cfdef0]">
                    <div class="flex flex-1 pt-1.5 pr-1 pl-[7px] leading-[17px] whitespace-nowrap">
                        <div class="flex w-[26px] flex-col gap-[5px]">
                            <button class="flex items-center gap-2 font-['Liberation_Serif',serif] text-[16px] leading-[14px] font-bold text-black">Σ<svg class="ml-px h-[3px] w-[5px]"><use href="#caret"/></svg></button>
                            <button class="flex items-center gap-1" aria-label="填充"><svg class="h-4 w-[13px]"><path d="M.5.5h12v15H.5z" fill="#e5eefb" stroke="#5577b0"/><path d="M4 4h5v4h3l-5.500 6L1 8h3z" fill="#2c6ad0"/></svg><svg class="ml-1 h-[3px] w-[5px]"><use href="#caret"/></svg></button>
                            <button class="mt-1 flex items-center gap-1" aria-label="清除"><svg class="h-[13px] w-[13px]"><path d="M1 9l6-7c2-2 6 0 5 3l-6 6c-2 2-6 0-5-2z" fill="#fff" stroke="#667"/><path d="M5 12.500h8" stroke="#000"/></svg><svg class="ml-1 h-[3px] w-[5px]"><use href="#caret"/></svg></button>
                        </div>
                        <button class="flex w-[42px] flex-col items-center"><span class="relative h-[30px] w-[30px] font-['Liberation_Serif',serif] text-[16px] leading-[15px] font-bold"><span class="absolute top-0 left-0 w-3 text-[#2b57b0]">A<br><span class="text-[#982828]">Z</span></span><svg class="absolute top-1 right-0 h-6 w-5"><path d="M0 1h20l-7 9v9l-5 4V10z" fill="#a9aeb6" stroke="#6c7280"/></svg></span><span class="mt-1">排序和</span><span class="flex items-center gap-1">筛选<svg class="h-[3px] w-[5px]"><use href="#caret"/></svg></span></button>
                        <button class="flex w-[42px] flex-col items-center"><svg class="h-[30px] w-[28px]"><path d="M6 3h6v9H5zM16 3h6l1 9h-7z" fill="#8fa0bf" stroke="#41557c"/><path d="M12 8h4v7h-4z" fill="#5a6d94"/><path d="M1 15l3-5h7l1 5v11H1zM16 15l1-5h7l3 5v11H16z" fill="#6d82ab" stroke="#2c3f68"/><path d="M4 15v9M19 15v9" stroke="#dfe6f4" stroke-width="2"/></svg><span class="mt-1">查找和</span><span class="flex items-center gap-1">选择<svg class="h-[3px] w-[5px]"><use href="#caret"/></svg></span></button>
                    </div>
                    <div class="flex h-[19px] items-center justify-center bg-[#c2d9f1] text-[#3e6aaa]">编辑</div>
                </div>
            </div>

            <!-- security bar -->
            <div class="mt-[6px] flex h-[33px] pl-[3px]">
                <div class="flex w-[984px] items-center border border-[#9ebde0] bg-linear-to-b from-white to-[#e4f2ff] pl-[3px]">
                    <svg class="h-4 w-[14px]"><path d="M7 .5l6 2.500c1 6-1 10-6 12.500C2 13 0 9 1 3z" fill="#f59a1e" stroke="#77787c"/><path d="M7 2l4 2-1 4-8 1-1-5z" fill="#ffd68a"/></svg>
                    <b class="ml-[11px]">安全警告</b><span class="ml-3">部分活动内容已被禁用。</span>
                    <button class="ml-[10px] h-[21px] w-[70px] border border-[#8aa8d0] bg-white">选项...</button>
                </div>
                <button class="ml-[7px] self-start" aria-label="Dismiss"><svg class="mt-1 size-[9px]"><path d="M1 1l7 7M8 1L1 8" stroke="#667" stroke-width="2"/></svg></button>
            </div>

            <!-- formula bar -->
            <div class="mx-px mt-1.5 flex h-5 border-y border-l border-[#6d8fbd] bg-white font-['Liberation_Mono','Noto_Sans_CJK_SC',monospace] text-[13px] text-black">
                <input aria-label="名称框" value="C22" class="w-[138px] text-center">
                <svg class="mt-2 mr-2 ml-1.5 h-[5px] w-2"><path d="M0 0h8L4 4z" fill="#000"/></svg>
                <div class="flex w-[76px] items-center justify-between rounded-l-full border-r border-[#6d8fbd] bg-linear-to-b from-[#dbe8f9] to-[#9fbfe8] pr-1.5 pl-1 font-['Liberation_Serif',serif] leading-4 font-bold text-[#444] italic"><i class="size-2.5 rounded-full bg-[#c3d0e4]"></i>fx</div>
                <input aria-label="编辑栏" value="外层完成铜厚35um" class="min-w-0 flex-1 pl-2.5 text-[15px]">
                <button class="w-[15px] border-l border-[#6d8fbd] bg-[#c6d9f3]" aria-label="展开"><svg class="mx-auto h-[10px] w-2"><path d="M1 1l3 3 3-3M1 5l3 3 3-3" stroke="#000" fill="none" stroke-width="1.500"/></svg></button>
            </div>

            <!-- sheet -->
            <div class="relative mx-px mt-[3px] flex bg-white">
                <table class="w-[991px] table-fixed border-separate border-spacing-0 text-center text-[18px] leading-[21px] text-black font-['Liberation_Mono','Noto_Sans_CJK_SC',monospace]">
                    <colgroup><col class="w-[38px]"><col class="w-[66px]"><col class="w-[43px]"><col class="w-[191px]"><col class="w-[36px]"><col class="w-[93px]"><col class="w-[62px]"><col class="w-[56px]"><col class="w-[102px]"><col class="w-[160px]"><col class="w-[101px]"><col class="w-[43px]"></colgroup>
                    <thead>
                        <tr class="h-[25px] font-['Liberation_Serif',serif] text-[#333] [&>th]:border-y [&>th]:border-r [&>th]:border-t-[#6d8fbd] [&>th]:border-[#9eb6ce] [&>th]:p-0 [&>th]:font-normal">
                            <th class="bg-[#a9c4e9]"><svg class="mr-1 ml-auto size-4"><path d="M16 0v16H0z" fill="#e4ecf7"/></svg></th>
                            <th class="bg-linear-to-b from-[#f9fcfd] to-[#d3dbe9]">A</th><th class="bg-linear-to-b from-[#f9fcfd] to-[#d3dbe9]">B</th>
                            <th class="border-r-[#f29536]! bg-linear-to-b from-[#f9d99f] to-[#f1c15f]">C</th><th class="border-r-[#f29536]! bg-linear-to-b from-[#f9d99f] to-[#f1c15f]">D</th><th class="border-r-[#f29536]! bg-linear-to-b from-[#f9d99f] to-[#f1c15f]">E</th><th class="border-r-[#f29536]! bg-linear-to-b from-[#f9d99f] to-[#f1c15f]">F</th><th class="border-r-[#f29536]! bg-linear-to-b from-[#f9d99f] to-[#f1c15f]">G</th><th class="border-r-[#f29536]! bg-linear-to-b from-[#f9d99f] to-[#f1c15f]">H</th><th class="border-r-[#f29536]! bg-linear-to-b from-[#f9d99f] to-[#f1c15f]">I</th>
                            <th class="bg-linear-to-b from-[#f9fcfd] to-[#d3dbe9]">J</th><th class="bg-linear-to-b from-[#f9fcfd] to-[#d3dbe9]"></th>
                        </tr>
                    </thead>
                    <tbody class="[&_td]:border-r [&_td]:border-b [&_td]:border-black [&_td]:p-0 [&_td]:pt-[3px] [&_th]:border-r [&_th]:border-b [&_th]:border-[#9eb6ce] [&_th]:bg-[#e4ecf7] [&_th]:p-0 [&_th]:align-bottom [&_th]:font-['Liberation_Serif',serif] [&_th]:leading-4 [&_th]:font-normal [&_th]:text-[#333] [&_tr>td:last-child]:border-r-0 [&_tr>td:last-child]:border-[#d0d7e5]">
                        <tr class="h-[34px]"><th>1</th><td colspan="10" class="border-r-0! text-[28px] leading-[30px] font-bold">预审指示</td><td></td></tr>
                        <tr class="h-[46px] font-bold"><th>2</th><td>产品<br>编号</td><td colspan="3" class="text-[17px]">6P00D03MA0</td><td class="text-[19px]">预审日期</td><td colspan="2" class="text-[17px]">2022/8/26</td><td>预审人</td><td>崔松林</td><td>附件/附图</td><td class="overflow-hidden pl-1! text-[16px] font-normal whitespace-nowrap text-[#444]">电话:</td></tr>
                        <tr class="h-[35px]"><th>3</th><td rowspan="4" class="font-bold text-[#0000f0]">待确认<br>光绘时<br>一起确<br>认问题</td><td class="text-[#444]">序号</td><td colspan="5" class="text-[19px] font-bold text-[#0000f0]">待与客户确认问题(原因与内容)</td><td colspan="2" class="font-bold text-[#0000f0]">预审建议</td><td></td><td></td></tr>
                        <tr class="h-[39px]"><th>4</th><td class="font-['Liberation_Serif',serif]">1</td><td colspan="5"></td><td colspan="2"></td><td></td><td></td></tr>
                        <tr class="h-[39px]"><th>5</th><td class="font-['Liberation_Serif',serif]">2</td><td colspan="5"></td><td colspan="2"></td><td></td><td></td></tr>
                        <tr class="h-[39px]"><th>6</th><td class="font-['Liberation_Serif',serif]">3</td><td colspan="5"></td><td colspan="2"></td><td></td><td></td></tr>
                        <tr class="h-[52px]"><th>7</th><td colspan="2" class="font-bold">工艺流程<br>指示</td><td colspan="7"></td><td></td><td></td></tr>
                        <tr class="h-[46px]"><th>8</th><td rowspan="3"></td><td class="font-['Liberation_Serif',serif] font-bold">1</td><td colspan="7" class="pt-px! pl-1! text-left text-[16px] font-bold">外形按削铜不露铜制作</td><td></td><td></td></tr>
                        <tr class="h-[46px]"><th>9</th><td class="font-['Liberation_Serif',serif] font-bold">2</td><td colspan="7" class="pt-px! pl-1! text-left text-[16px] font-bold text-[#e00000]">忽略附图的这些层</td><td class="pl-1! text-left text-[15px] text-[#800080]"><a href="#fig1" class="underline">图<br>1(fig1)'!A</a></td><td></td></tr>
                        <tr class="h-[46px]"><th>10</th><td></td><td colspan="7"></td><td></td><td></td></tr>
                    </tbody>
                </table>
                <div class="w-4 bg-[#7999c6]">
                    <div class="m-px h-[7px] border border-[#8aa8d0] bg-white"></div>
                    <svg class="mx-auto mt-1.5 h-1.5 w-2"><path d="M4 0l4 5H0z" fill="#3d5a8c"/></svg>
                    <div class="mx-px mt-1.5 flex h-[206px] flex-col items-center justify-center gap-0.5 rounded-sm border border-[#6382b0] bg-linear-to-r from-[#edf2f9] to-[#b9cbe2]"><i class="h-px w-2 bg-[#667]"></i><i class="h-px w-2 bg-[#667]"></i><i class="h-px w-2 bg-[#667]"></i></div>
                </div>
                <!-- red pointer drawn over the cells -->
                <svg class="absolute top-[195px] left-[176px] h-[125px] w-[60px]"><path d="M6 6l40 96" stroke="#f00" stroke-width="5" stroke-linecap="round"/><path d="M36 98l14-7 4 24-4 4z" fill="#f00" stroke="#f00" stroke-width="2" stroke-linejoin="round"/></svg>
            </div>
        </section>

        <script>

            //Layer rows of the sidebar: name, row colour, colour cell, marker
            const hand = `<svg class="size-2.5"><use href="#hand"/></svg>`;
            const grid = `<svg class="size-[7px]"><path d="M.5.5h6v6h-6zM3.500 0v7M0 3.500h7" fill="none" stroke="#000"/></svg>`;
            const layers = [
                ["to", "bg-white", "", hand], ["ts", "bg-[#04a77c]", "", hand], ["cs", "bg-[#fcc44c]", "", hand], ["pln2b", "bg-[#d6a800]", "", hand],
                ["sig3t", "bg-[#fcc44c]", "bg-[#449900]", grid], ["sig4b", "bg-[#fcc44c]", "", ""], ["pln5t", "bg-[#d6a800]", "", hand], ["ss", "bg-[#fcc44c]", "", hand],
                ["bs", "bg-[#04a77c]", "", hand], ["bo", "bg-white", "", hand], null,
                ["drl", "bg-[#99b4bf]", "", ""], ["szdrl", "bg-[#99b4bf]", "", ""], ["rout", "bg-[#d8d8d8]", "bg-[#0020f8]", ""], null,
                ["tp", "bg-[#9bdcda]", "", ""], ["bp", "bg-[#9bdcda]", "", ""], ["gd1", "bg-[#9bdcda]", "", hand]
            ];
            for (let i = 0; i < 38; i++) layers.push(["", "bg-black", "", ""]);

            const groups = [[]];
            layers.forEach(l => l ? groups[groups.length - 1].push(l) : groups.push([]));
            document.getElementById("layers").innerHTML = groups.map(group => `
                <div class="flex flex-col gap-0.5 bg-black pb-0.5 pl-0.5">${group.map(([name, row, cell, mark]) => `
                    <label class="flex h-[14px] items-center gap-0.5">
                        <input type="checkbox" class="size-[14px] shrink-0 appearance-none border-2 bg-white shadow-[inset_0_0_0_2px_black] ${name === "sig3t" ? "border-[#0000a0]" : "border-white"}">
                        <span class="h-[14px] w-[14px] shrink-0 ${cell}"></span>
                        <span class="flex h-[14px] w-[81px] items-center justify-between pr-px pl-0.5 ${row}">${name}${mark}</span>
                    </label>`).join("")}
                </div>`).join("");

            //Categories of the results viewer
            const cats = ["Pad to pad (21)", "Pad to circuit (377)", "Circuit to circuit (304)", "NPTH to pad (1)", "NPTH to circuit (19)", "PTH to Copper (437)", "PTH (Comp) Annular ring (75)", "VIA Annular ring (1866)", "Missing Pad for VIA (281)", "Missing Pad for PTH (56)", "Spacing length (125)", "Rout to Copper (104)", "Pads (14535)", "Lines (163)", "Non standard rotated lines (31)", "Slivers (24)", "Local Spacing (2)", "Conductor width (26)"];
            document.getElementById("cats").innerHTML = cats.map(c =>
                `<li class="h-[18px] w-[293px]"><span class="block h-4 leading-[17px] whitespace-nowrap ${c.startsWith("Rout") ? "bg-black text-[#7fe0cc]" : ""}">${c}</span></li>`).join("");

            //Diamond radio buttons
            const radio = (group, text, on, row) => `
                <label class="flex items-center gap-1.5 whitespace-nowrap ${row}">
                    <input type="radio" name="${group}" ${on ? "checked" : ""} class="size-2.5 shrink-0 rotate-45 appearance-none border-2 border-[#c5f5f3] border-r-[#54807f] border-b-[#54807f] checked:border-[#54807f] checked:border-r-[#e8ffff] checked:border-b-[#e8ffff] checked:bg-[#c00048]">${text}
                </label>`;
            document.getElementById("stats").innerHTML = ["Count", "Average", "Sum", "Min", "Max"].map(t => radio("stat", t, t === "Min", "h-[27px] pl-2")).join("");
            document.getElementById("modes").innerHTML = ["Between Points", "Between Contours", "Between Nets", "Annular Ring", "Between Midpoints"].map(t => radio("mode", t, t === "Between Contours", "h-[29px] pt-0.5 pl-2 border-b-2 border-black")).join("");

            //Histogram
            const bars = [["4.804", 42, "4.8-", "4.9"], ["5", 43, "5-", "5.1"], ["5.518", 48, "5.5-", "5.6"], ["9.81", 87, "9.8-", "9.9"], ["13.807", 123, "13.8-", "13.9"]];
            document.getElementById("bars").innerHTML = bars.map(([v, h], i) => `
                <div class="w-12 whitespace-nowrap"><p class="flex h-[15px] justify-center leading-[15px] ${i ? "" : "text-[#e00000]"}">${v}</p><div class="border border-r-0 border-b-0 border-black bg-[#ff1818] ${i === 4 ? "border-r!" : ""}" style="height:${h}px"></div></div>`).join("");
            document.getElementById("ranges").innerHTML = bars.map(([, , a, b], i) => `
                <div class="w-12 border border-black bg-[#ff1818] leading-[14px] ${i < 4 ? "border-r-0" : ""}"><p class="flex justify-center pt-0.5">${a}</p><p class="pr-0.5 text-right">${b}</p></div>`).join("");

            //Checklist cards
            const check = (icon, name, erf, msg) => `
                <div class="h-[119px] border-b-2 border-black">
                    <div class="flex h-[34px] items-center pr-0.5 pl-[38px]">
                        <svg class="mr-1.5 size-[22px] shrink-0"><use href="#${icon}"/></svg>
                        <h4 class="w-[102px] shrink-0 overflow-hidden font-['Liberation_Serif',serif] text-[14px] whitespace-nowrap">${name}</h4>
                        <button class="h-[30px] w-[44px] shrink-0 font-normal shadow-[inset_2px_2px_#c5f5f3,inset_-2px_-2px_#54807f]">ERF:</button>
                        <input type="text" aria-label="${name} ERF" value="${erf}" class="mx-1 h-[30px] w-[104px] min-w-0 border-2 border-[#54807f] border-r-[#c5f5f3] border-b-[#c5f5f3] pb-2.5 pl-1 font-normal">
                        <button class="flex size-[29px] shrink-0 items-center justify-center shadow-[inset_2px_2px_#c5f5f3,inset_-2px_-2px_#54807f]"><span class="size-[22px] border border-black text-[22px] leading-5">?</span></button>
                    </div>
                    <div class="flex h-7 gap-1 pt-[3px] pr-0.5 font-['Liberation_Serif',serif] text-[14px]">
                        <button class="h-[23px] w-[116px] shadow-[inset_2px_2px_#c5f5f3,inset_-2px_-2px_#54807f]">Parameters...</button>
                        <button class="h-[23px] w-[116px] shadow-[inset_2px_2px_#c5f5f3,inset_-2px_-2px_#54807f]">Ranges...</button>
                        <button class="h-[23px] flex-1 shadow-[inset_2px_2px_#c5f5f3,inset_-2px_-2px_#54807f]">Online...</button>
                    </div>
                    <div class="flex h-[35px] items-center gap-[5px] pl-1.5">
                        <svg class="size-[29px] bg-[#55cfb0] p-[3px] shadow-[inset_2px_2px_#a0eedd,inset_-2px_-2px_#2c7562]"><use href="#runner"/></svg>
                        <svg class="size-[29px] bg-[#55cfb0] p-[3px] shadow-[inset_2px_2px_#a0eedd,inset_-2px_-2px_#2c7562]"><use href="#runner"/><path d="M16 13l6 8M22 14l-4 5" stroke="#e02020" stroke-width="1.500"/></svg>
                        <svg class="size-[29px] bg-[#55cfb0] p-[3px] shadow-[inset_2px_2px_#a0eedd,inset_-2px_-2px_#2c7562]"><use href="#runner"/><path d="M2 2h6l2 2h8l2-2h2v19H2v-8l2-3-2-3z" fill="none" stroke="#e02020"/></svg>
                        <p class="w-[196px] text-left leading-[15px] font-normal whitespace-pre">    08 Sep 2022<br>08:44 PM - Done</p>
                        <svg class="size-[30px] shrink-0 bg-[#55cfb0]"><path d="M4 4h22v20H4z" fill="none" stroke="#000"/><circle cx="15" cy="13" r="7" fill="none" stroke="#000"/><path d="M15 8v6h5" stroke="#000" fill="none"/></svg>
                        <span class="-ml-1 h-[30px] w-4 shrink-0 border border-black bg-[#f01818]"></span>
                    </div>
                    <p class="h-5 border-y border-black bg-[#ffffcc] pl-6 leading-5 font-normal">${msg}</p>
                </div>`;
            document.getElementById("checks").innerHTML =
                check("drill", "Drill Checks", "Drill (Mil", "drill layers processed") +
                check("drill", "Board-Drill Checks", "Drill", "layers processed") +
                check("signal", "Signal Layer Checks", "Signal", "layers processed");

            //Motif scroll bars
            document.querySelectorAll(".vbar").forEach(b => {
                b.classList.add("bg-black/15", "shadow-[inset_2px_2px_#2c7562]");
                b.innerHTML = `<svg class="m-px h-3 w-[calc(100%-2px)] shrink-0"><use href="#tri-up"/></svg><i class="mx-0.5 flex-1 bg-white/15 shadow-[inset_2px_2px_#a0eedd,inset_-2px_-2px_#2c7562]"></i><svg class="m-px h-3 w-[calc(100%-2px)] shrink-0"><use href="#tri-down"/></svg>`;
            });
            document.querySelectorAll(".hbar").forEach(b => {
                b.classList.add("bg-black/15", "shadow-[inset_2px_2px_#2c7562]");
                b.innerHTML = `<svg class="m-px h-3 w-3 shrink-0"><use href="#tri-left"/></svg><i class="my-0.5 flex-1 bg-white/15 shadow-[inset_2px_2px_#a0eedd,inset_-2px_-2px_#2c7562]"></i><svg class="m-px h-3 w-3 shrink-0"><use href="#tri-right"/></svg>`;
            });

        </script>

    </body>

</html>
